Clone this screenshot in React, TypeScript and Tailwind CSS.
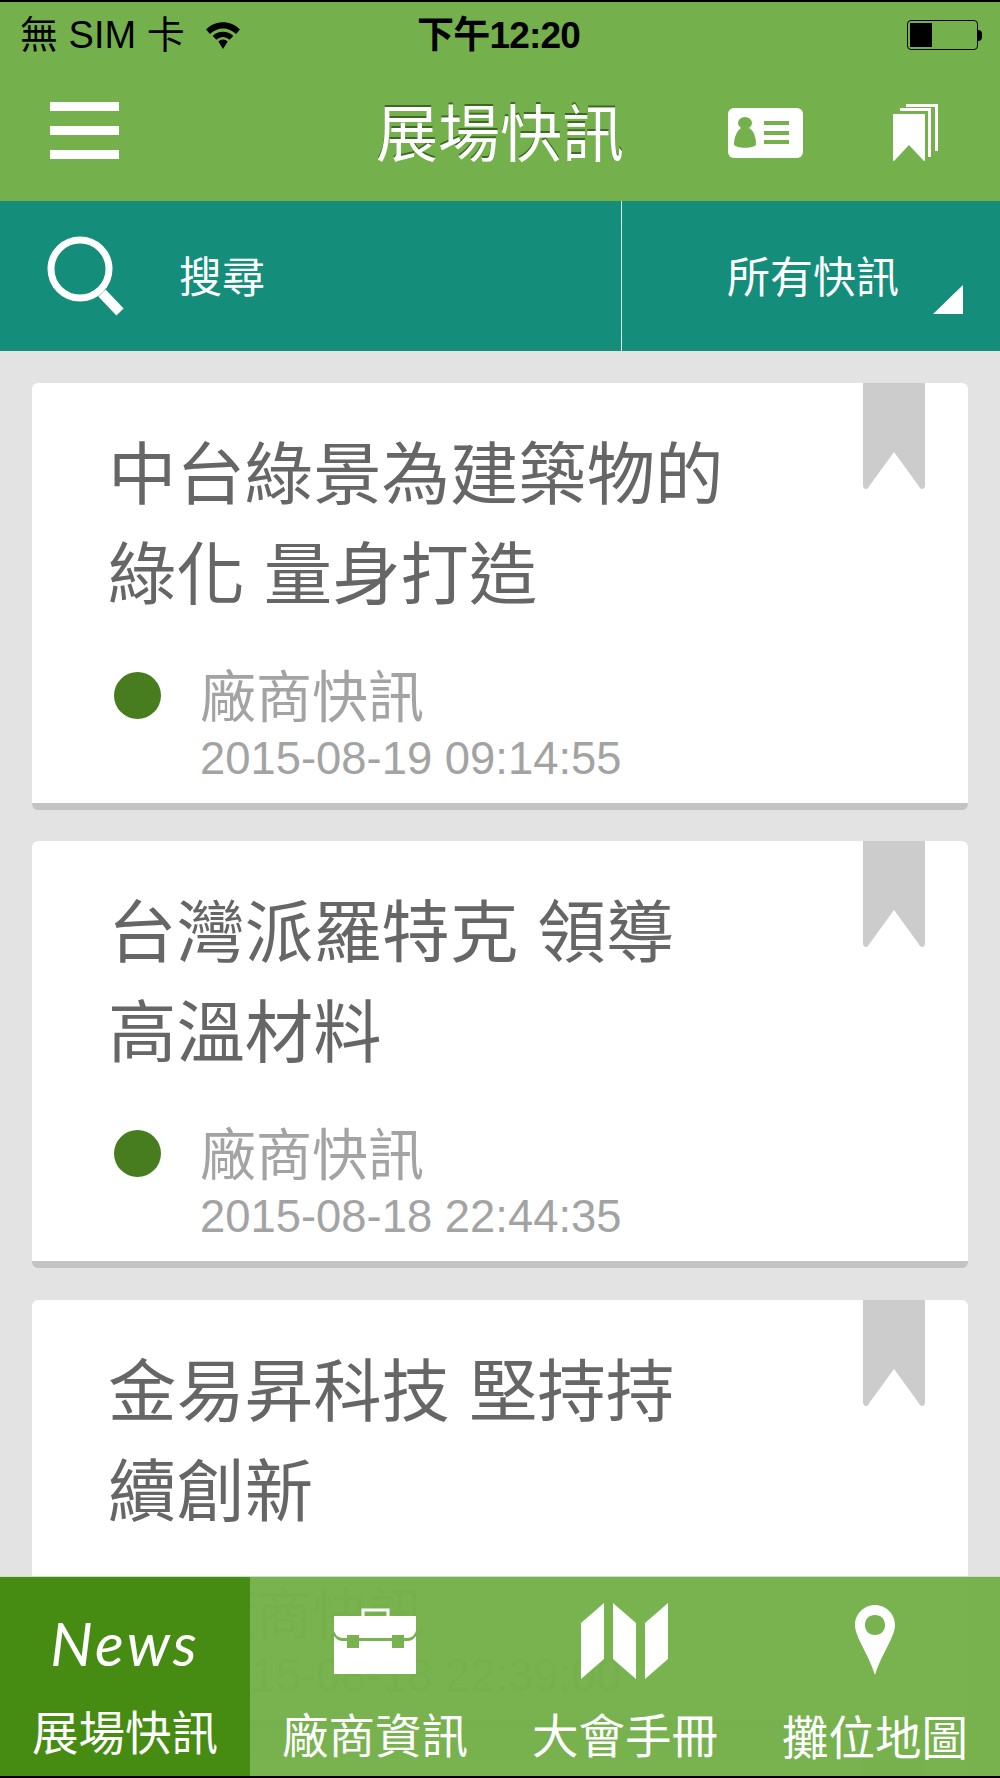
const cjk = "font-['Liberation_Sans','Noto_Sans_CJK_TC',sans-serif]";

type NewsItem = { title: string[]; date: string };

const newsItems: NewsItem[] = [
  { title: ['中台綠景為建築物的', '綠化 量身打造'], date: '2015-08-19 09:14:55' },
  { title: ['台灣派羅特克 領導', '高溫材料'], date: '2015-08-18 22:44:35' },
  { title: ['金易昇科技 堅持持', '續創新'], date: '2015-08-18 22:39:00' },
  { title: ['', ''], date: '' },
];

const BookmarkRibbon = () => (
  <svg width="62" height="106" viewBox="0 0 62 106" className="absolute top-0 right-[43px]">
    <path d="M0 0H62V102Q62 106 59 106Q57 106 55 102L31 69L7 102Q5 106 3 106Q0 106 0 102Z" fill="#cccccc" />
  </svg>
);

const NewsCard = ({ item }: { item: NewsItem }) => (
  <div className="relative h-[427px] rounded-md bg-white border-b-[7px] border-[#c3c3c3] shrink-0">
    <BookmarkRibbon />
    <div className="pl-[76px] pt-[42px] text-[68.4px] leading-[100px] text-[#666666]">
      {item.title.map((line, i) => (
        <div key={i} className="h-[100px] whitespace-pre">{line}</div>
      ))}
    </div>
    {item.date && (
      <div className="flex pl-[82px] pt-[46px]">
        <div className="w-[47px] h-[47px] rounded-full bg-[#477d1e] mt-[1px]" />
        <div className="ml-[39px] text-[#a3a3a3]">
          <div className="text-[56px] leading-[60px] -mt-[3px]">廠商快訊</div>
          <div className="text-[45.4px] leading-[50px] mt-[6px]">{item.date}</div>
        </div>
      </div>
    )}
  </div>
);

const StatusBar = () => (
  <div className="flex items-center h-[66px] pl-[20px] pr-[18px] text-black text-[38px] relative">
    <span className="leading-none">無 SIM 卡</span>
    <svg width="38" height="30" viewBox="0 0 40 32" className="ml-[19px]">
      <path d="M2 10C12 0 28 0 38 10L34 15C26 7 14 7 6 15Z" fill="#000" />
      <path d="M9 17C15 11 25 11 31 17L27 21C22 17 18 17 13 21Z" fill="#000" />
      <path d="M15 23C18 20 22 20 25 23L20 31Z" fill="#000" />
    </svg>
    <span className="absolute left-[417px] font-bold text-[37px] leading-none tracking-[-0.8px]">下午12:20</span>
    <div className="ml-auto flex items-center">
      <div className="w-[71px] h-[30px] rounded-[4px] border border-black p-[2px]">
        <div className="w-[22px] h-full bg-black" />
      </div>
      <div className="w-[4px] h-[11px] bg-black rounded-r-sm" />
    </div>
  </div>
);

const TitleBar = () => (
  <div className="flex items-start h-[133px] relative">
    <div className="ml-[50px] mt-[34px] w-[69px] flex flex-col gap-[15px]">
      <div className="h-[9px] bg-white" />
      <div className="h-[9px] bg-white" />
      <div className="h-[9px] bg-white" />
    </div>
    <h1 className="absolute left-[376px] top-[30px] text-[62px] leading-[76px] font-normal text-white [text-shadow:0_-2px_0_#3c6a24]">
      展場快訊
    </h1>
    <svg width="75" height="50" viewBox="0 0 75 50" className="absolute left-[728px] top-[40px]">
      <rect width="75" height="50" rx="6" fill="#fff" />
      <ellipse cx="17" cy="15" rx="7" ry="6" fill="#74b14c" />
      <path d="M6 36C6 28 10 22 13 20H21C25 22 28 28 28 36C28 41 6 41 6 36Z" fill="#74b14c" />
      <rect x="36" y="13" width="25" height="4" fill="#74b14c" />
      <rect x="36" y="23" width="25" height="4" fill="#74b14c" />
      <rect x="36" y="32" width="25" height="4" fill="#74b14c" />
    </svg>
    <svg width="46" height="58" viewBox="0 0 46 58" className="absolute left-[893px] top-[36px]">
      <path d="M0 10H32V56Q32 58 30 56L16 41L2 56Q0 58 0 56Z" fill="#fff" />
      <path d="M7 5.500H36.500V53" fill="none" stroke="#fff" strokeWidth="3" />
      <path d="M13 1.500H43.500V47" fill="none" stroke="#fff" strokeWidth="3" />
    </svg>
  </div>
);

const SearchBar = () => (
  <div className="flex h-[150px] bg-[#148e7b] text-white">
    <div className="flex items-center w-[622px] border-r border-r-[#d8e8e4] relative">
      <svg width="78" height="80" viewBox="0 0 78 80" className="ml-[47px]">
        <circle cx="33" cy="33" r="29" fill="none" stroke="#fff" strokeWidth="7" />
        <path d="M55 57L73 76" fill="none" stroke="#fff" strokeWidth="10" />
      </svg>
      <span className="ml-[54px] mt-[4px] text-[43px] leading-none">搜尋</span>
    </div>
    <div className="flex-1 relative flex items-center">
      <span className="ml-[105px] mt-[4px] text-[43px] leading-none">所有快訊</span>
      <svg width="30" height="29" viewBox="0 0 30 29" className="absolute left-[311px] top-[84px]">
        <path d="M30 0V29H0Z" fill="#fff" />
      </svg>
    </div>
  </div>
);

const BottomNav = () => (
  <div className="absolute left-0 top-[1576px] w-full h-[202px] border-b-2 border-b-black flex text-white bg-[#72b049f5] border-t border-t-[#cfe0c4]">
    <div className="w-[250px] bg-[#468c12] flex flex-col items-center">
      <span className="font-['Lato',sans-serif] italic text-[60px] leading-[70px] mt-[31px] tracking-[3px]">News</span>
      <span className="mt-[31px] text-[46.500px] leading-[50px]">展場快訊</span>
    </div>
    <div className="w-[250px] flex flex-col items-center">
      <svg width="84" height="67" viewBox="0 0 84 67" className="mt-[31px]">
        <path d="M30 8V2H55V8" fill="none" stroke="#fff" strokeWidth="3" />
        <path d="M1 8H83V23C81 28 78 30 74 30H71V27H59V30H26V27H14V30H10C6 30 3 28 1 23Z" fill="#fff" />
        <path d="M1 28C3 31 6 33 10 33H14V40H26V33H59V40H71V33H74C78 33 81 31 83 28V66H1Z" fill="#fff" />
      </svg>
      <span className="mt-[37px] text-[46.500px] leading-[50px]">廠商資訊</span>
    </div>
    <div className="w-[250px] flex flex-col items-center">
      <svg width="88" height="76" viewBox="0 0 88 76" className="mt-[26px]">
        <path d="M0 20L23 0V56L0 76Z" fill="#fff" />
        <path d="M32 0L55 20V76L32 56Z" fill="#fff" />
        <path d="M64 20L87 0V56L64 76Z" fill="#fff" />
      </svg>
      <span className="mt-[33px] text-[46.500px] leading-[50px]">大會手冊</span>
    </div>
    <div className="w-[250px] flex flex-col items-center">
      <svg width="40" height="70" viewBox="0 0 40 70" className="mt-[28px]">
        <path
          fillRule="evenodd"
          d="M20 0C31 0 40 9 40 20C40 32 27 48 20 70C13 48 0 32 0 20C0 9 9 0 20 0ZM20 10C14 10 10 14 10 20C10 26 14 30 20 30C26 30 30 26 30 20C30 14 26 10 20 10Z"
          fill="#fff"
        />
      </svg>
      <span className="mt-[39px] text-[46.500px] leading-[50px]">攤位地圖</span>
    </div>
  </div>
);

export default function App() {
  return (
    <div className={`relative w-[1000px] h-[1778px] overflow-hidden bg-[#e3e3e3] ${cjk}`}>
      <div className="bg-[#74b14c] border-t-2 border-t-black">
        <StatusBar />
        <TitleBar />
      </div>
      <SearchBar />
      <div className="flex flex-col gap-[31.250px] px-[32px] pt-[32px]">
        {newsItems.map((item, i) => (
          <NewsCard key={i} item={item} />
        ))}
      </div>
      <BottomNav />
    </div>
  );
}
